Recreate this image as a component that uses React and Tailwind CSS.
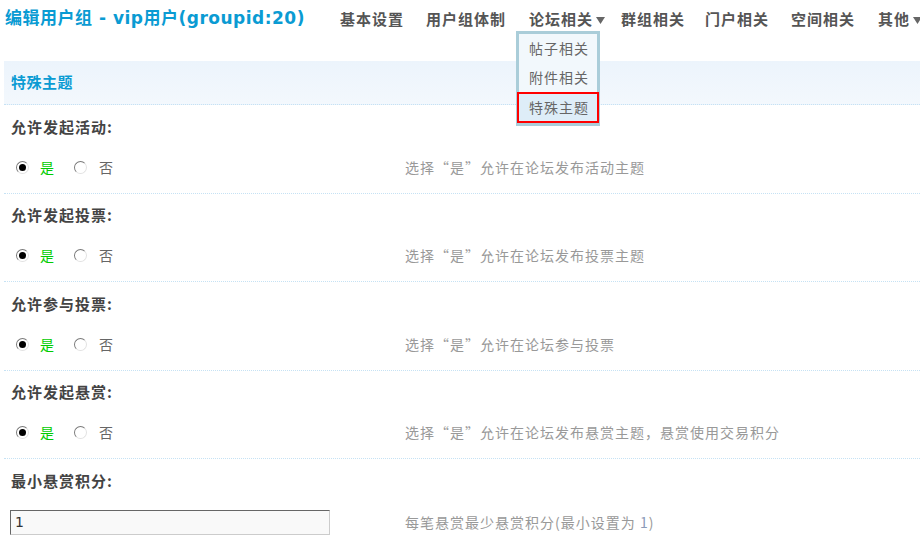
import React from "react";

const cjk = { fontFamily: '"Noto Sans CJK SC", "Noto Sans", sans-serif' };
const title = { fontFamily: '"DejaVu Sans", "Noto Sans CJK SC", sans-serif' };

function Arrow() {
  return (
    <svg width="9" height="7" viewBox="0 0 9 7" className="ml-[3px] mt-[2px]">
      <polygon points="0,0 9,0 4.5,7" fill="#666" />
    </svg>
  );
}

function Radio({ checked }) {
  return (
    <span className="relative inline-flex w-[13px] h-[13px] rounded-full border-[1.5px] border-t-[#7a7a7a] border-l-[#7a7a7a] border-b-[#e2e2e2] border-r-[#e2e2e2] bg-white items-center justify-center">
      {checked && <span className="w-[7px] h-[7px] rounded-full bg-black" />}
    </span>
  );
}

function YesNoRow({ label, desc }) {
  return (
    <div className="border-b border-dotted border-[#c6e2f4] pt-[12px] pb-[15.5px]">
      <div className="h-[20px] flex items-center pl-[7px] text-[15px] font-bold text-[#444] tracking-[1px]">
        {label}
      </div>
      <div className="mt-[20px] h-[20px] flex items-center">
        <div className="w-[401px] shrink-0 flex items-center pl-[12px]">
          <Radio checked />
          <span className="ml-[11px] text-[14px] text-[#00cc00]">是</span>
          <span className="ml-[20px] flex"><Radio /></span>
          <span className="ml-[12px] text-[14px] text-[#666]">否</span>
        </div>
        <div className="text-[14px] text-[#999] tracking-[1px] whitespace-nowrap">{desc}</div>
      </div>
    </div>
  );
}

export default function App() {
  const nav = [
    ["基本设置", false, "ml-0"],
    ["用户组体制", false, "ml-[22px]"],
    ["论坛相关", true, "ml-[23px]"],
    ["群组相关", false, "ml-[16px]"],
    ["门户相关", false, "ml-[20px]"],
    ["空间相关", false, "ml-[22px]"],
    ["其他", true, "ml-[23px]"],
  ];
  return (
    <div className="relative w-[920px] h-[547px] overflow-hidden bg-white" style={cjk}>
      <div className="flex items-center h-[38px] pl-[5px] whitespace-nowrap">
        <div className="w-[335px] shrink-0 text-[17px] font-bold text-[#0a9bd3] tracking-[0.5px]" style={title}>
          编辑用户组 - vip用户(groupid:20)
        </div>
        <div className="flex items-center shrink-0">
          {nav.map(([t, a, m]) => (
            <div key={t} className={`${m} flex items-center shrink-0 text-[15px] font-bold text-[#555] tracking-[1px]`}>
              {t}
              {a && <Arrow />}
            </div>
          ))}
        </div>
      </div>

      <div className="ml-[4px] mt-[23px]">
        <div className="h-[44px] flex items-center pl-[7px] bg-gradient-to-b from-[#ecf4fc] to-[#f3f8fd] border-b border-dotted border-[#c6e2f4] text-[15px] font-bold text-[#0a9bd3] tracking-[0.5px]">
          特殊主题
        </div>
        <YesNoRow label="允许发起活动:" desc="选择“是”允许在论坛发布活动主题" />
        <YesNoRow label="允许发起投票:" desc="选择“是”允许在论坛发布投票主题" />
        <YesNoRow label="允许参与投票:" desc="选择“是”允许在论坛参与投票" />
        <YesNoRow label="允许发起悬赏:" desc="选择“是”允许在论坛发布悬赏主题，悬赏使用交易积分" />
        <div className="border-b border-dotted border-[#c6e2f4] pt-[12px] pb-[12px]">
          <div className="h-[20px] flex items-center pl-[7px] text-[15px] font-bold text-[#444] tracking-[1px]">
            最小悬赏积分:
          </div>
          <div className="mt-[19px] flex items-center">
            <div className="w-[401px] shrink-0 pl-[6px]">
              <div className="w-[320px] h-[25px] bg-[#f9f9f9] border border-t-[#666] border-l-[#666] border-b-[#ccc] border-r-[#ccc] flex items-center pl-[4px] text-[14px] text-[#333]" style={{ fontFamily: '"DejaVu Sans", sans-serif' }}>
                1
              </div>
            </div>
            <div className="text-[14px] text-[#999] tracking-[1px] whitespace-nowrap">
              每笔悬赏最少悬赏积分(最小设置为 <span className="text-[#8a9ab8]">1</span>)
            </div>
          </div>
        </div>
      </div>

      <div className="absolute left-[516px] top-[31px] w-[84px] h-[95px] border-[3px] border-[#aacdd9] bg-[#f2f8fc] flex flex-col">
        <div className="h-[30px] flex items-center pl-[10px] text-[14px] text-[#666] tracking-[1px]">帖子相关</div>
        <div className="h-[30px] flex items-center pl-[10px] text-[14px] text-[#666] tracking-[1px]">附件相关</div>
        <div className="-mx-[2px] h-[32px] flex items-center pl-[10px] border-2 border-[#ff0000] bg-[#deedf8] text-[14px] text-[#666] tracking-[1px]">特殊主题</div>
      </div>
    </div>
  );
}
